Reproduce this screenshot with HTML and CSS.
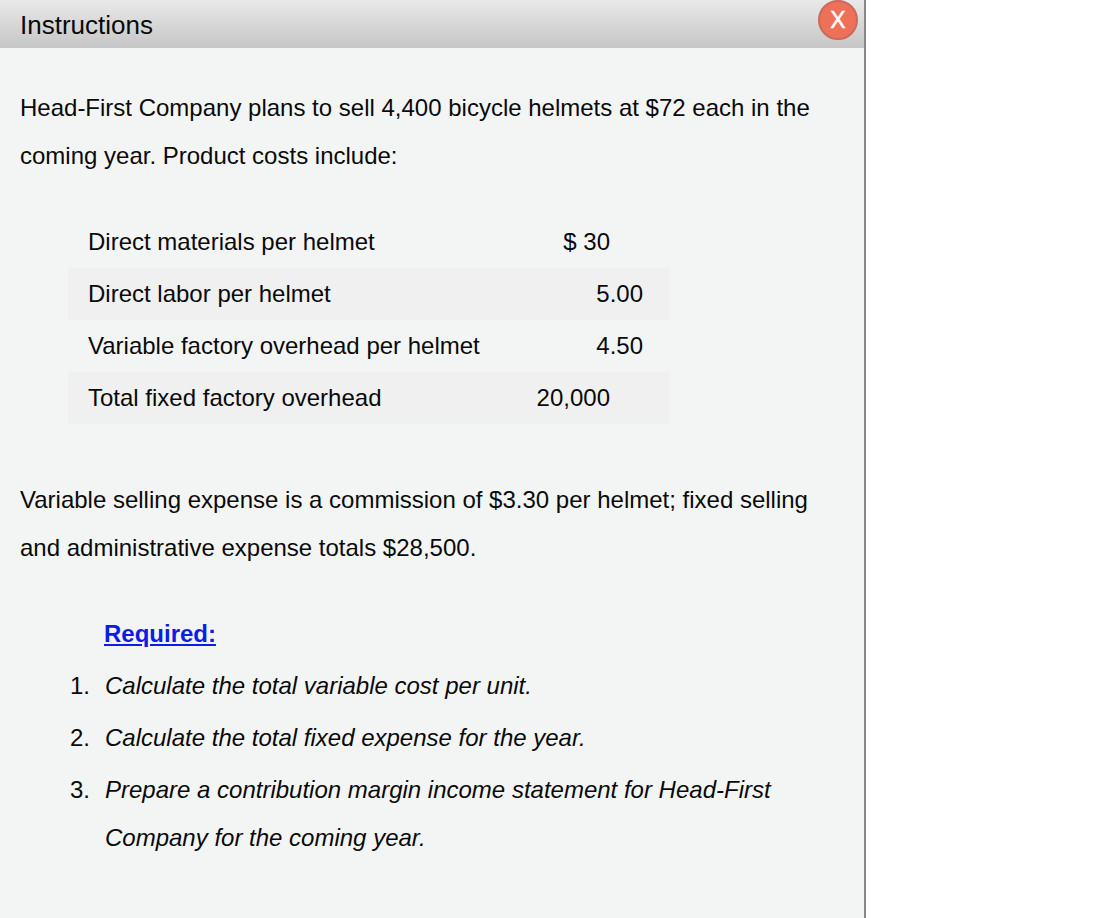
FILE: index.html
```html
<!DOCTYPE html>
<html lang="en">
<head>
<meta charset="utf-8">
<title>Instructions</title>
<link rel="stylesheet" href="styles.css">
</head>
<body>
<main class="panel">
  <header class="bar">
    <h1 class="bar-title">Instructions</h1>
    <button class="close" type="button">X</button>
  </header>
  <section class="content">
    <p class="para">Head-First Company plans to sell 4,400 bicycle helmets at $72 each in the coming year. Product costs include:</p>
    <table class="costs">
      <tr><td class="label">Direct materials per helmet</td><td class="amt">$ 30</td></tr>
      <tr class="alt"><td class="label">Direct labor per helmet</td><td class="amt dec">5.00</td></tr>
      <tr><td class="label">Variable factory overhead per helmet</td><td class="amt dec">4.50</td></tr>
      <tr class="alt"><td class="label">Total fixed factory overhead</td><td class="amt">20,000</td></tr>
    </table>
    <p class="para">Variable selling expense is a commission of $3.30 per helmet; fixed selling and administrative expense totals $28,500.</p>
    <div class="required"><a class="req-link" href="#">Required:</a></div>
    <ol class="tasks">
      <li>Calculate the total variable cost per unit.</li>
      <li>Calculate the total fixed expense for the year.</li>
      <li>Prepare a contribution margin income statement for Head-First Company for the coming year.</li>
    </ol>
  </section>
</main>
</body>
</html>
```
FILE: styles.css
```css
html, body {
  margin: 0;
  height: 100%;
  background: #fff;
}
body {
  font-family: "Liberation Sans", Arial, sans-serif;
  font-size: 24px;
  color: #0a0a0a;
  overflow: hidden;
}
.panel {
  width: 864px;
  height: 918px;
  background: #f3f5f4;
  border-right: 2px solid #888;
}
.bar {
  height: 48px;
  display: flex;
  justify-content: space-between;
  align-items: flex-start;
  padding: 0 6px 0 20px;
  background: linear-gradient(#e9e9e9, #c6c6c6);
}
.bar-title {
  margin: 0;
  font-size: 26px;
  font-weight: 400;
  line-height: 50px;
}
.close {
  width: 40px;
  height: 40px;
  margin: 0;
  padding: 0;
  border: 2px solid #c96a5c;
  border-radius: 50%;
  background: #ef7059;
  color: #fff;
  font-family: inherit;
  font-size: 23px;
  font-weight: 400;
  -webkit-text-stroke: 0.5px #fff;
  line-height: 36px;
}
.content {
  padding: 36px 20px 0;
}
.para {
  margin: 0 0 36px;
  line-height: 48px;
  width: 800px;
}
.costs {
  width: 602px;
  margin: 0 0 52px 48px;
  border-collapse: collapse;
}
.costs td {
  height: 52px;
  padding: 0;
}
.alt {
  background: #f0f0f0;
}
.label {
  padding-left: 20px !important;
}
.amt {
  text-align: right;
  padding-right: 60px !important;
}
.amt.dec {
  padding-right: 27px !important;
}
.required {
  height: 52px;
  line-height: 52px;
  padding-left: 84px;
}
.req-link {
  color: #0c1de8;
  font-weight: 700;
  text-decoration: underline;
}
.tasks {
  margin: 0;
  padding: 0 60px 0 85px;
  font-style: italic;
  list-style: none;
  counter-reset: task;
}
.tasks li {
  line-height: 48px;
  padding: 2px 0;
  counter-increment: task;
}
.tasks li::before {
  content: counter(task) ".";
  display: inline-block;
  width: 35px;
  margin-left: -35px;
  font-style: normal;
}
```
